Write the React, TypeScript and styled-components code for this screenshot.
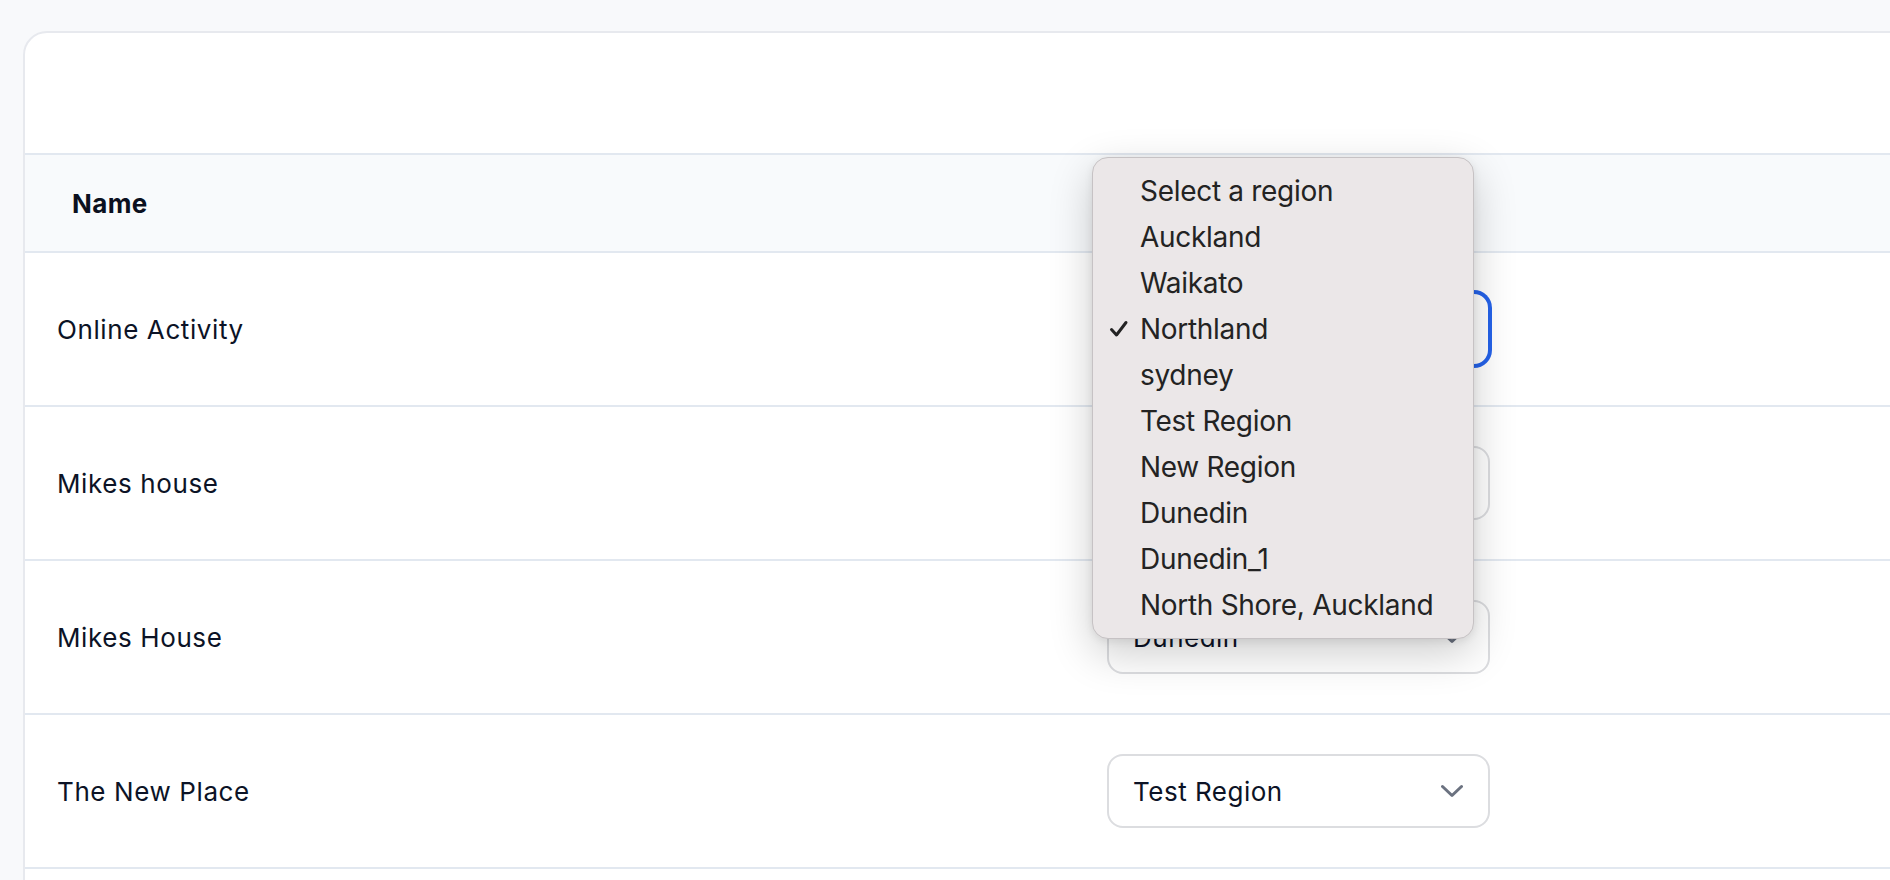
import React from 'react';
import styled, { createGlobalStyle } from 'styled-components';

interface Place {
  name: string;
  region: string;
}

const places: Place[] = [
  { name: 'Online Activity', region: 'Northland' },
  { name: 'Mikes house', region: 'Auckland' },
  { name: 'Mikes House', region: 'Dunedin' },
  { name: 'The New Place', region: 'Test Region' },
];

const regions = [
  'Select a region',
  'Auckland',
  'Waikato',
  'Northland',
  'sydney',
  'Test Region',
  'New Region',
  'Dunedin',
  'Dunedin_1',
  'North Shore, Auckland',
];

const Chevron: React.FC = () => (
  <svg width="22" height="14" viewBox="0 0 22 14" fill="none">
    <path d="M1.5 2.5l9.5 9 9.5-9" stroke="#6b7280" strokeWidth="3" strokeLinecap="round" strokeLinejoin="round" />
  </svg>
);

const Tick: React.FC = () => (
  <svg width="20" height="18" viewBox="0 0 20 18" fill="none">
    <path d="M2.5 9.5l5 5.5L17 2.5" stroke="#232323" strokeWidth="3" strokeLinecap="round" strokeLinejoin="round" />
  </svg>
);

const App: React.FC = () => {
  const openRow = 0;
  const selected = places[openRow].region;

  return (
    <>
      <GlobalStyle />
      <Page>
        <Card>
          <CardTop />
          <Table>
            <HeadCell>Name</HeadCell>
            <HeadCell>Region</HeadCell>
            {places.map((place, i) => (
              <React.Fragment key={place.name}>
                <Cell>{place.name}</Cell>
                <Cell>
                  <Select focused={i === openRow}>
                    <span>{place.region}</span>
                    <Chevron />
                  </Select>
                </Cell>
              </React.Fragment>
            ))}
          </Table>
        </Card>

        <Menu>
          {regions.map((region) => (
            <MenuItem key={region}>
              <Check>{region === selected && <Tick />}</Check>
              {region}
            </MenuItem>
          ))}
        </Menu>
      </Page>
    </>
  );
};

const GlobalStyle = createGlobalStyle`
  html, body {
    margin: 0;
    padding: 0;
    height: 100%;
    overflow: hidden;
    background: #f8f9fb;
    font-family: Inter, "Noto Sans", sans-serif;
    color: #0f172a;
  }
`;

const Page = styled.div`
  position: relative;
  height: 880px;
  padding: 31px 0 0 23px;
  box-sizing: border-box;
  overflow: hidden;
`;

const Card = styled.div`
  width: 1940px;
  min-height: 1000px;
  background: #ffffff;
  border: 2px solid #e7e9ee;
  border-radius: 24px;
  box-sizing: border-box;
  overflow: hidden;
`;

const CardTop = styled.div`
  height: 120px;
`;

const Table = styled.div`
  display: grid;
  grid-template-columns: 1050px 1fr;
`;

const HeadCell = styled.div`
  height: 96px;
  display: flex;
  align-items: center;
  padding-left: 47px;
  background: #f8fafc;
  border-top: 2px solid #e2e8f0;
  border-bottom: 2px solid #e2e8f0;
  font-size: 26px;
  font-weight: 700;
  letter-spacing: 0.4px;
  color: #0b1020;
`;

const Cell = styled.div`
  height: 152px;
  display: flex;
  align-items: center;
  padding-left: 32px;
  border-bottom: 2px solid #e2e8f0;
  font-size: 26px;
  letter-spacing: 0.6px;
  color: #0c1326;
`;

const Select = styled.div<{ focused?: boolean }>`
  width: 383px;
  height: 74px;
  box-sizing: border-box;
  display: flex;
  align-items: center;
  justify-content: space-between;
  padding: 0 25px 0 24px;
  border-radius: 16px;
  background: #ffffff;
  border: 2px solid ${({ focused }) => (focused ? '#2563eb' : '#dcdde0')};
  box-shadow: ${({ focused }) => (focused ? '0 0 0 2px #2563eb' : 'none')};
  font-size: 26px;
  letter-spacing: 0.5px;
  color: #0c1326;
`;

const Menu = styled.div`
  position: absolute;
  left: 1092px;
  top: 157px;
  width: 382px;
  box-sizing: border-box;
  padding: 10px 0;
  background: #ebe7e8;
  border: 1px solid #c6c2c4;
  border-radius: 16px;
  box-shadow: 0 14px 44px rgba(0, 0, 0, 0.2), 0 2px 8px rgba(0, 0, 0, 0.08);
`;

const MenuItem = styled.div`
  height: 46px;
  display: flex;
  align-items: center;
  padding-left: 16px;
  font-size: 28px;
  letter-spacing: -0.3px;
  color: #232323;
`;

const Check = styled.span`
  width: 31px;
  height: 18px;
  display: flex;
  align-items: center;
`;

export default App;
